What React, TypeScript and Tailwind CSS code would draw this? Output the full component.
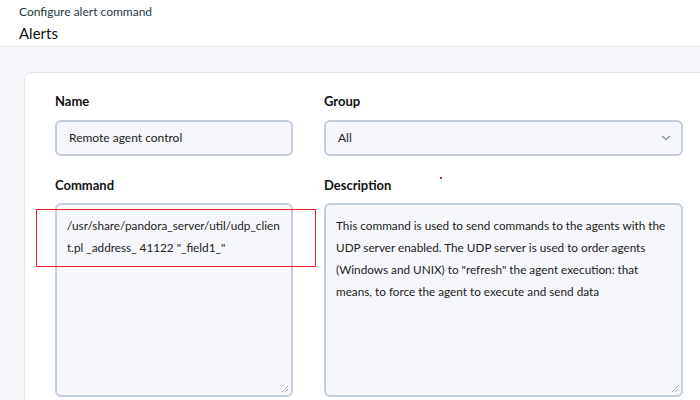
import React from "react";

export default function App() {
  const font = { fontFamily: "Lato, 'Noto Sans', sans-serif" };
  return (
    <div className="w-[700px] h-[400px] overflow-hidden bg-[#f6f7fa] relative" style={font}>
      <div className="h-[47px] bg-white border-b border-[#e5e7eb] pl-[19px] pt-[4px]">
        <div className="text-[12px] leading-[16px] text-[#1d3a44]">Configure alert command</div>
        <div className="text-[15px] leading-[20px] mt-[3px] text-[#111]">Alerts</div>
      </div>
      <div className="ml-[24px] mt-[25px] w-[720px] h-[400px] bg-white border border-[#e1e3e8] rounded-[8px] pl-[30px] pt-[19px]">
        <div className="flex gap-[31px]">
          <div className="w-[238px]">
            <div className="text-[13px] font-bold text-[#111] leading-[18px]">Name</div>
            <div className="mt-[10px] h-[36px] rounded-[6px] border-2 border-[#c5cedc] bg-[#f6f7fa] flex items-center pl-[12px] text-[12px] text-[#222]">
              Remote agent control
            </div>
          </div>
          <div className="w-[359px]">
            <div className="text-[13px] font-bold text-[#111] leading-[18px]">Group</div>
            <div className="mt-[10px] h-[36px] rounded-[6px] border-2 border-[#c5cedc] bg-[#f6f7fa] flex items-center justify-between pl-[12px] pr-[10px] text-[12px] text-[#222]">
              <span>All</span>
              <svg width="10" height="6" viewBox="0 0 10 6" fill="none">
                <path d="M1.5 1.5 L5 4.5 L8.5 1.5" stroke="#8a94a6" strokeWidth="1.4" strokeLinecap="round" strokeLinejoin="round" />
              </svg>
            </div>
          </div>
        </div>
        <div className="flex gap-[31px] mt-[20px]">
          <div className="w-[238px]">
            <div className="text-[13px] font-bold text-[#111] leading-[18px]">Command</div>
            <div className="mt-[9px] h-[194px] rounded-[6px] border-2 border-[#c5cedc] bg-[#f6f7fa] relative px-[10px] pt-[10px] text-[11.75px] leading-[22px] text-[#222] break-all">
              /usr/share/pandora_server/util/udp_client.pl _address_ 41122 "_field1_"
              <Grip />
            </div>
          </div>
          <div className="w-[359px]">
            <div className="text-[13px] font-bold text-[#111] leading-[18px]">Description</div>
            <div className="mt-[9px] h-[194px] rounded-[6px] border-2 border-[#c5cedc] bg-[#f6f7fa] relative pl-[10px] pr-[8px] pt-[10px] text-[11.75px] leading-[22px] text-[#222]">
              This command is used to send commands to the agents with the UDP server enabled. The UDP server is used to order agents (Windows and UNIX) to "refresh" the agent execution: that means, to force the agent to execute and send data
              <Grip />
            </div>
          </div>
        </div>
      </div>
      <div className="absolute left-[36px] top-[209px] w-[280px] h-[58px] border border-[#e8232a]" />
      <div className="absolute left-[440px] top-[177px] w-[2px] h-[2px] bg-[#e8232a]" />
    </div>
  );
}

function Grip() {
  return (
    <svg className="absolute right-[2px] bottom-[2px]" width="9" height="9" viewBox="0 0 9 9">
      <path d="M8 2 L2 8 M8 5 L5 8" stroke="#555" strokeWidth="0.8" strokeDasharray="1 0.8" />
    </svg>
  );
}
